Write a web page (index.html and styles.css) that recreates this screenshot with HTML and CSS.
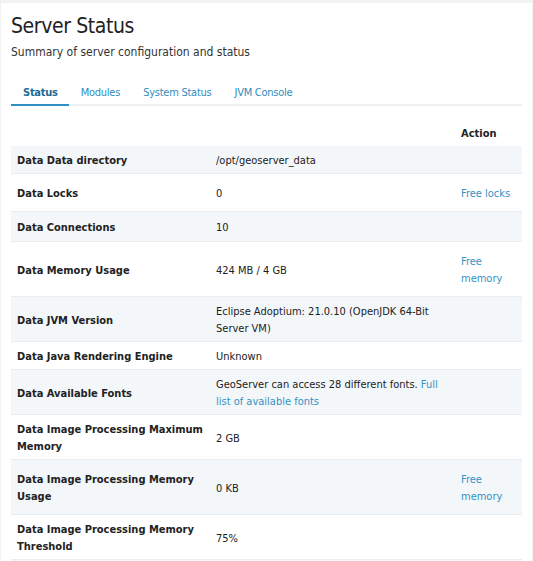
FILE: index.html
```html
<!DOCTYPE html>
<html>
<head>
<meta charset="utf-8">
<link rel="stylesheet" href="styles.css">
</head>
<body>
<div class="page">
  <h1 class="title">Server Status</h1>
  <p class="subtitle">Summary of server configuration and status</p>
  <ul class="tabs">
    <li class="tab active">Status</li>
    <li class="tab">Modules</li>
    <li class="tab">System Status</li>
    <li class="tab">JVM Console</li>
  </ul>
  <table class="status">
    <colgroup><col class="c1"><col class="c2"><col class="c3"></colgroup>
    <thead>
      <tr><th></th><th></th><th>Action</th></tr>
    </thead>
    <tbody>
      <tr class="odd"><th>Data Data directory</th><td>/opt/geoserver_data</td><td></td></tr>
      <tr><th>Data Locks</th><td>0</td><td><a class="act">Free locks</a></td></tr>
      <tr class="odd tall"><th>Data Connections</th><td>10</td><td></td></tr>
      <tr><th>Data Memory Usage</th><td>424 MB / 4 GB</td><td><a class="act">Free memory</a></td></tr>
      <tr class="odd"><th>Data JVM Version</th><td>Eclipse Adoptium: 21.0.10 (OpenJDK 64-Bit Server VM)</td><td></td></tr>
      <tr><th>Data Java Rendering Engine</th><td>Unknown</td><td></td></tr>
      <tr class="odd"><th>Data Available Fonts</th><td>GeoServer can access 28 different fonts. <a class="lnk">Full list of available fonts</a></td><td></td></tr>
      <tr><th>Data Image Processing Maximum Memory</th><td>2 GB</td><td></td></tr>
      <tr class="odd"><th>Data Image Processing Memory Usage</th><td>0 KB</td><td><a class="act">Free memory</a></td></tr>
      <tr><th>Data Image Processing Memory Threshold</th><td>75%</td><td></td></tr>
      <tr class="odd"><th>&nbsp;</th><td></td><td></td></tr>
    </tbody>
  </table>
</div>
</body>
</html>
```

FILE: styles.css
```css
html, body { margin: 0; padding: 0; }
body {
  background: #f2f2f2;
  font-family: "DejaVu Sans Condensed", "DejaVu Sans", Verdana, sans-serif;
  font-size: 11px;
  color: #222;
  height: 561px;
  overflow: hidden;
}
.page {
  background: #fff;
  margin: 3px 1px 0 1px;
  padding: 10px 10px 0 10px;
  height: 600px;
}
.title {
  font-weight: normal;
  font-size: 21px;
  line-height: 26px;
  margin: 0;
  color: #222;
  letter-spacing: -0.4px;
}
.subtitle {
  margin: 6px 0 0 0;
  font-size: 12px;
  line-height: 14px;
  color: #333;
}
.tabs {
  list-style: none;
  margin: 23px 0 0 0;
  padding: 0;
  display: flex;
  border-bottom: 2px solid #eef1f3;
}
.tab {
  padding: 0 11px 0 12px;
  line-height: 22px;
  color: #2f8cbd;
  letter-spacing: -0.25px;
  margin-bottom: -2px;
  border-bottom: 2px solid transparent;
}
.tab.active {
  font-weight: bold;
  color: #1d6b99;
  border-bottom-color: #2d8fc6;
}
.status {
  width: 100%;
  border-collapse: collapse;
  margin-top: 0;
}
.c1 { width: 199px; }
.c2 { width: 245px; }
.status th, .status td {
  text-align: left;
  vertical-align: middle;
  padding: 6px 6px 4px 6px;
  line-height: 17px;
  border-bottom: 1px solid #e9edf0;
}
.status thead th {
  height: 31px;
  padding-top: 5px;
  padding-bottom: 4px;
  vertical-align: bottom;
  border-bottom: none;
  font-weight: bold;
}
.status tbody th { font-weight: bold; }
.status tr.odd th, .status tr.odd td { background: #f3f7fa; }
.status tr.tall th, .status tr.tall td { padding-top: 7px; padding-bottom: 5px; }
.act {
  display: inline-block;
  margin: 5px 0 5px 0;
  color: #3592c4;
}
.lnk { color: #3592c4; }
```
